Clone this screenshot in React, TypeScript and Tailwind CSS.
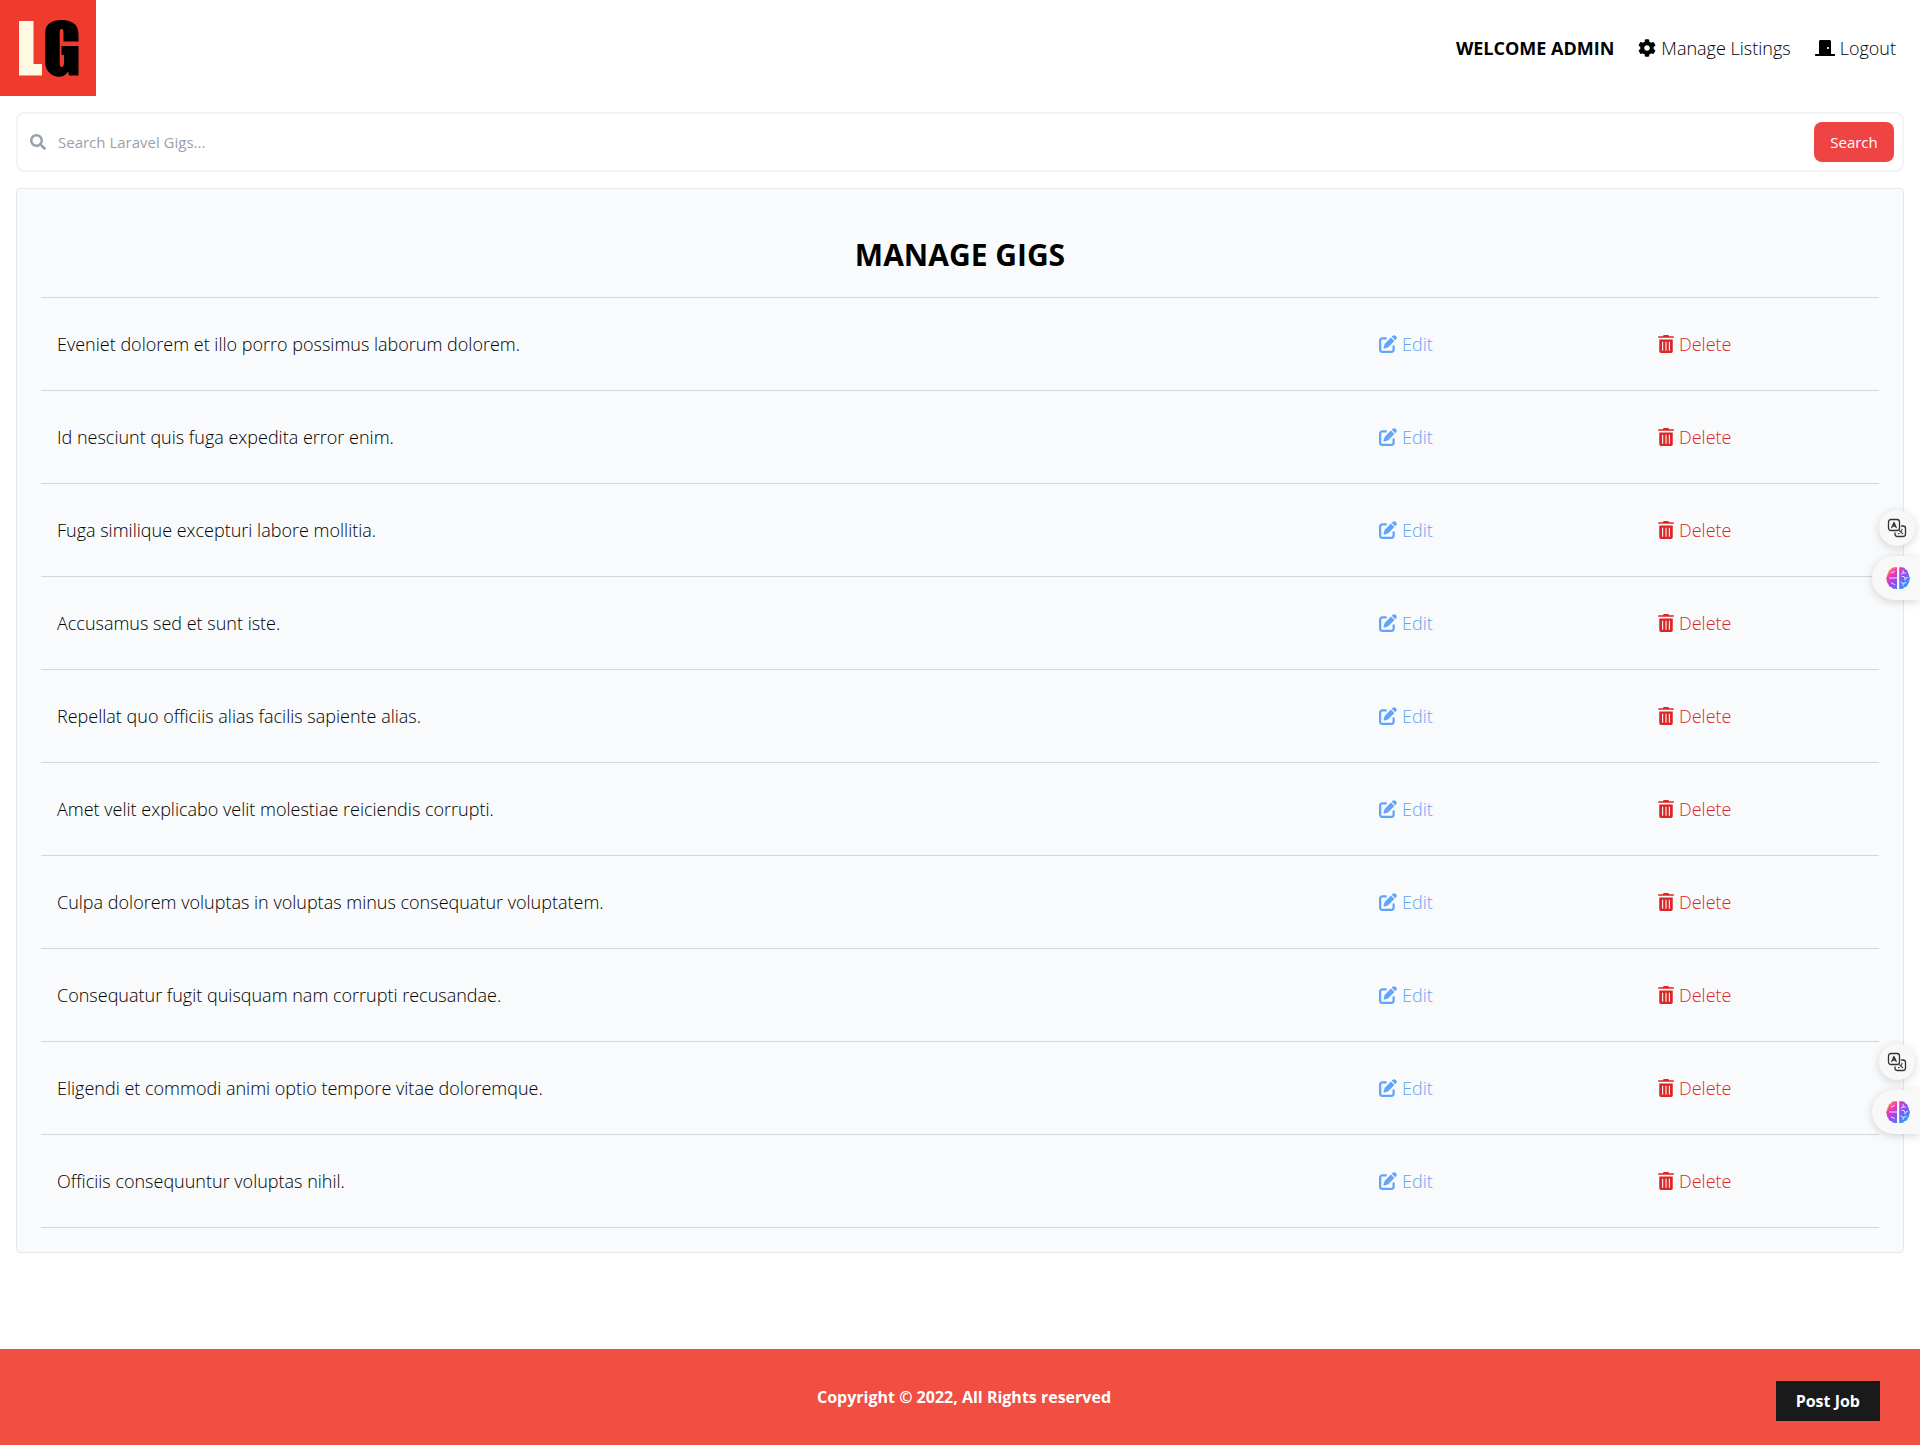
import React from "react";
import { FaSearch, FaCog as FaGear, FaDoorClosed } from "react-icons/fa";
import { FaPenToSquare } from "react-icons/fa6";

const gigs = [
  "Eveniet dolorem et illo porro possimus laborum dolorem.",
  "Id nesciunt quis fuga expedita error enim.",
  "Fuga similique excepturi labore mollitia.",
  "Accusamus sed et sunt iste.",
  "Repellat quo officiis alias facilis sapiente alias.",
  "Amet velit explicabo velit molestiae reiciendis corrupti.",
  "Culpa dolorem voluptas in voluptas minus consequatur voluptatem.",
  "Consequatur fugit quisquam nam corrupti recusandae.",
  "Eligendi et commodi animi optio tempore vitae doloremque.",
  "Officiis consequuntur voluptas nihil.",
];

function Logo() {
  return (
    <svg viewBox="0 0 96 96" className="size-24" role="img" aria-label="LG">
      <rect width="96" height="96" fill="#ef3b2d" />
      <path d="M19 21H33.5V64H42V75.5H19Z" fill="#fff8e3" />
      <path
        d="M78.5 41.5H63.5V33.5C63.5 30.5 63.300 29 61.700 29C60.200 29 59.700 30 59.700 33V62.500C59.700 65.500 60.200 67 61.700 67C63.300 67 64 65.500 64 62V55H61.500V46H78.500V75.500H69L68 71.500C66 75 63 76.700 59 76.700C52 76.700 45.200 71 45.200 62.500V36C45.200 30 45.600 27 48.500 24C51.500 21.200 56 20 61.500 20C67 20 71.500 21.200 74.500 24C77.500 26.800 78.500 30 78.500 36Z"
        fill="#000"
      />
    </svg>
  );
}

function TrashIcon() {
  return (
    <svg viewBox="0 0 448 512" className="h-[18px] w-4" fill="currentColor" aria-hidden="true">
      <path
        fillRule="evenodd"
        d="M432 32H312l-9-19A24 24 0 0 0 281 0H167a24 24 0 0 0-22 13l-9 19H16A16 16 0 0 0 0 48v16a16 16 0 0 0 16 16h416a16 16 0 0 0 16-16V48a16 16 0 0 0-16-16zM32 128v336a48 48 0 0 0 48 48h288a48 48 0 0 0 48-48V128zM112 192h32v256h-32zM208 192h32v256h-32zM304 192h32v256h-32z"
      />
    </svg>
  );
}

function TranslateIcon() {
  return (
    <svg viewBox="0 0 20 20" className="size-5" fill="none" stroke="#333" strokeWidth="1.300" strokeLinecap="round" strokeLinejoin="round" aria-hidden="true">
      <rect x="1.500" y="1.500" width="11" height="11" rx="2.500" />
      <path d="M4.800 9.500L7 4.500L9.200 9.500M5.500 8H8.500" />
      <path d="M14.500 8H16A2.500 2.500 0 0 1 18.500 10.500V16A2.500 2.500 0 0 1 16 18.500H10.500A2.500 2.500 0 0 1 8 16V15" />
      <path d="M11.500 15.700C13.500 14.800 14.500 13.500 15 11.300M12.500 12.800L15.700 15.700" strokeWidth="1.100" />
    </svg>
  );
}

function BrainIcon({ id }: { id: string }) {
  return (
    <svg viewBox="0 0 24 22" className="h-[22px] w-6" aria-hidden="true">
      <defs>
        <linearGradient id={id} x1="3" y1="1" x2="21" y2="20" gradientUnits="userSpaceOnUse">
          <stop offset="0" stopColor="#ff9a2e" />
          <stop offset="0.250" stopColor="#f535b5" />
          <stop offset="0.550" stopColor="#8b4df5" />
          <stop offset="1" stopColor="#22a7ff" />
        </linearGradient>
      </defs>
      <path
        fill={`url(#${id})`}
        d="M11 0.300H8C6.500 0.300 5.500 1 5 2.200C3.300 2.700 2.300 4 2.300 5.700C1.300 6.700 1 8 1.300 9C0 10 -0.200 12 0.900 13.200C0.700 15 1.300 16.300 2.400 17.200C2.600 19 3.900 20 5.400 20.100C6.200 21.300 7.400 22 8.800 22H11ZM13.200 0.300H16.200C17.700 0.300 18.700 1 19.200 2.200C20.900 2.700 21.900 4 21.900 5.700C22.900 6.700 23.200 8 22.900 9C24.200 10 24.300 12 23.300 13.200C23.500 15 22.900 16.300 21.800 17.200C21.600 19 20.300 20 18.800 20.100C18 21.300 16.800 22 15.400 22H13.200Z"
      />
      <path
        d="M5.500 6L8.500 4.500M3.500 11H11M5.500 16L8.500 17.500M17 3.500V6H19.500M17 6L15 7.500M16 9.500H18L19 11.500L21.500 10.500M19 11.500V13M14.800 15L17 16.500L20 15.500M17 16.500V18.500"
        fill="none"
        stroke="#f3dcff"
        strokeWidth="1"
        strokeLinecap="round"
      />
    </svg>
  );
}

function FloatingTools({ id, className }: { id: string; className: string }) {
  return (
    <div className={`absolute right-0 flex flex-col items-end gap-[10px] ${className}`}>
      <button type="button" aria-label="Translate" className="mr-[5px] flex size-9 items-center justify-center rounded-full bg-[#f8f8f9] shadow-[0_2px_10px_rgba(0,0,0,0.160)]">
        <TranslateIcon />
      </button>
      <button type="button" aria-label="Assistant" className="flex h-11 w-12 items-center rounded-l-full bg-[#f8f8f9] pl-[14px] shadow-[0_2px_10px_rgba(0,0,0,0.160)]">
        <BrainIcon id={id} />
      </button>
    </div>
  );
}

export default function App() {
  return (
    <div className="relative flex min-h-screen flex-col overflow-x-hidden bg-white font-['Open_Sans','Noto_Sans',sans-serif] text-base text-black">
      <nav className="mb-4 flex items-center justify-between">
        <a href="#home">
          <Logo />
        </a>
        <ul className="mr-6 flex items-center gap-6 text-lg">
          <li className="font-bold uppercase">Welcome Admin</li>
          <li>
            <a href="#manage" className="flex items-center gap-[5px] font-light">
              <FaGear className="size-[18px]" /> Manage Listings
            </a>
          </li>
          <li>
            <button type="button" className="flex items-center gap-[5px] font-light">
              <FaDoorClosed className="h-[18px] w-5" /> Logout
            </button>
          </li>
        </ul>
      </nav>

      <main className="mb-24">
        <form className="mx-4 mb-4 flex h-[60px] items-center rounded-lg border-2 border-gray-100 pr-2 pl-3" onSubmit={(e) => e.preventDefault()}>
          <FaSearch className="size-4 text-gray-400" />
          <input
            type="text"
            aria-label="Search Laravel Gigs"
            placeholder="Search Laravel Gigs..."
            className="h-14 flex-1 pl-3 text-[15px] placeholder:text-gray-400 focus:outline-none"
          />
          <button type="submit" className="h-10 w-20 rounded-lg bg-[#ef4444] text-[15px] text-white">
            Search
          </button>
        </form>

        <div className="mx-4 rounded border border-gray-200 bg-[#f9fafb] p-6">
          <h1 className="my-6 text-center text-3xl font-bold uppercase">Manage Gigs</h1>
          <table className="w-full table-fixed border-collapse text-lg">
            <colgroup>
              <col />
              <col className="w-[279px]" />
              <col className="w-[237px]" />
            </colgroup>
            <tbody>
              {gigs.map((gig) => (
                <tr key={gig} className="border-y border-gray-300">
                  <td className="px-4 py-8 font-light">{gig}</td>
                  <td className="px-4 py-8">
                    <a href="#edit" className="flex items-center gap-[5px] font-light text-[#60a5fa]">
                      <FaPenToSquare className="size-[18px]" /> Edit
                    </a>
                  </td>
                  <td className="px-4 py-8">
                    <button type="button" className="flex items-center gap-[5px] font-light text-[#dc2626]">
                      <TrashIcon /> Delete
                    </button>
                  </td>
                </tr>
              ))}
            </tbody>
          </table>
        </div>
      </main>

      <footer className="relative mt-auto flex h-24 items-center justify-center bg-[#f14f42] font-bold text-white">
        <p className="ml-2">Copyright © 2022, All Rights reserved</p>
        <a href="#create" className="absolute top-1/3 right-10 bg-[#1a1a1a] px-5 py-2">
          Post Job
        </a>
      </footer>

      <FloatingTools id="brain-upper" className="top-[510px]" />
      <FloatingTools id="brain-lower" className="top-[1044px]" />
    </div>
  );
}
